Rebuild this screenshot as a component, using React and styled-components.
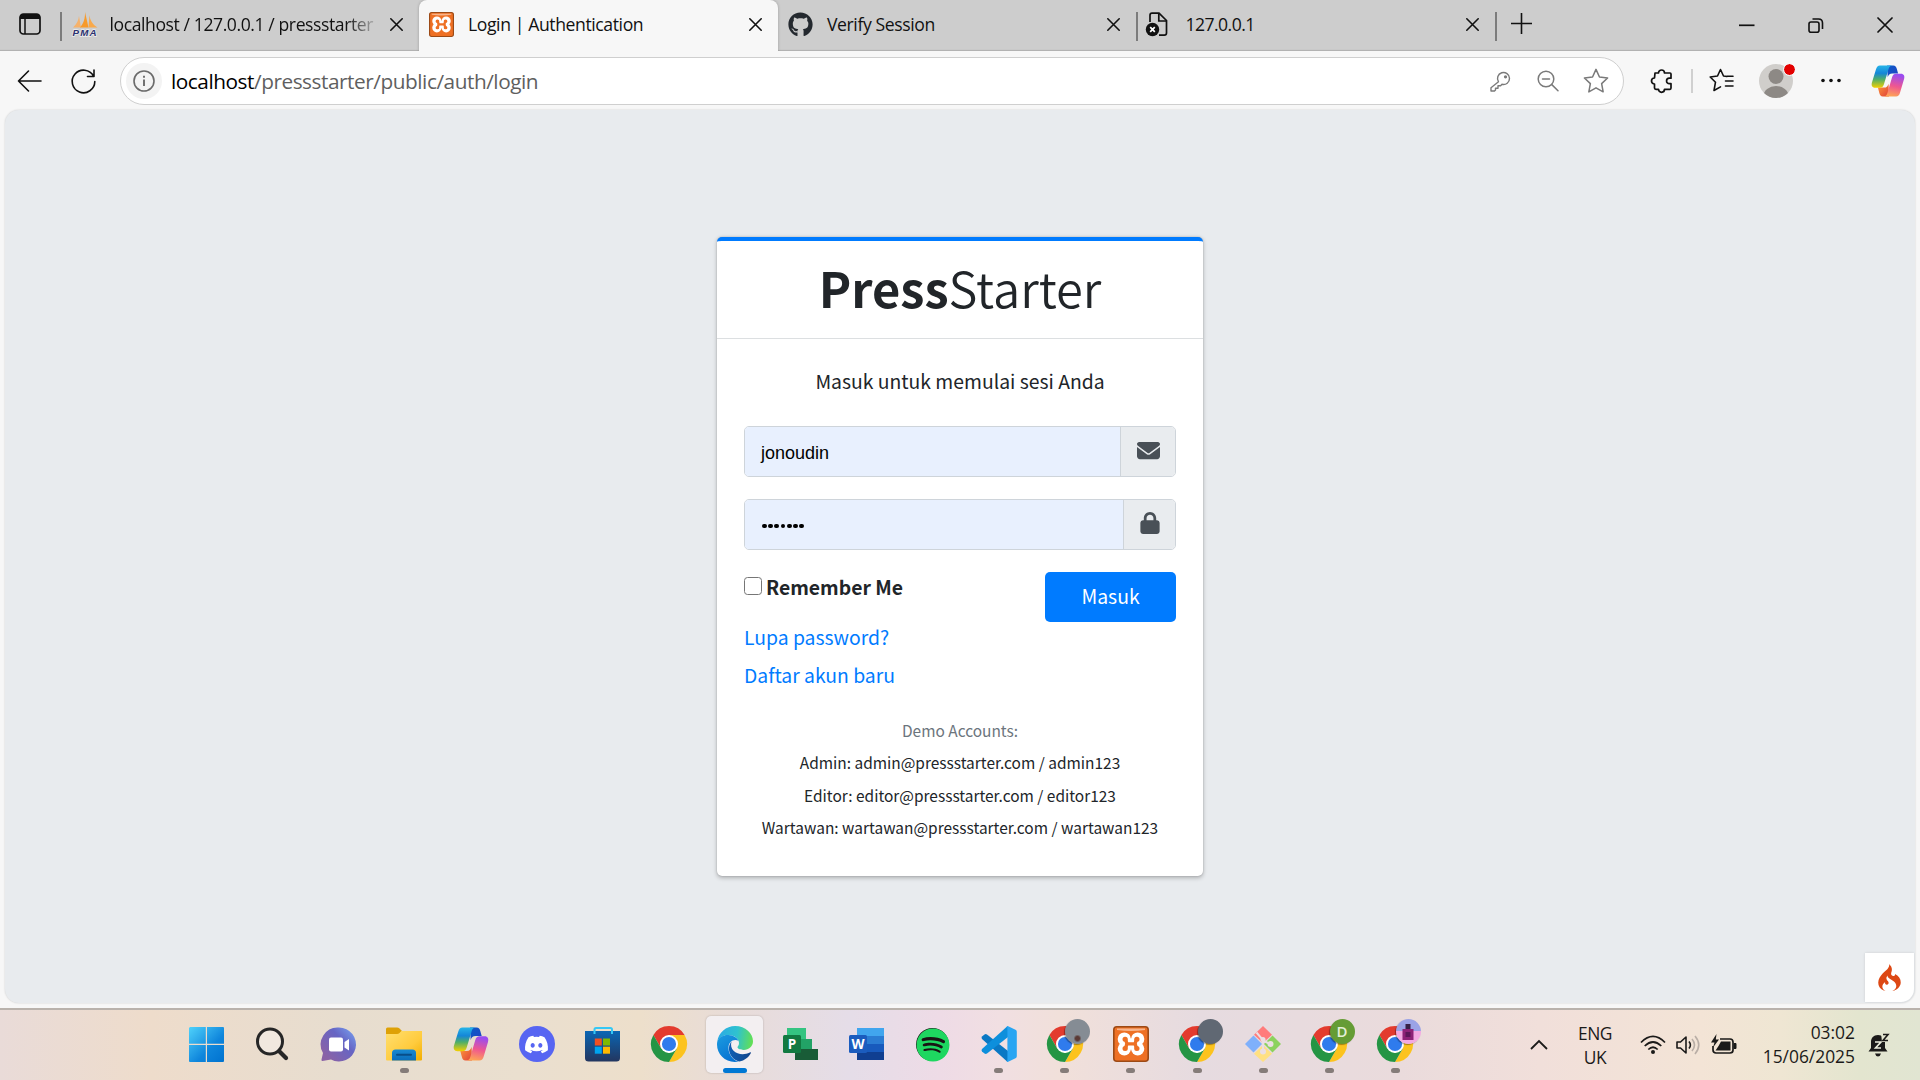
import React from "react";
import styled, { createGlobalStyle, css } from "styled-components";
import { FaGithub, FaSpotify, FaDiscord } from "react-icons/fa";
import { FaEnvelope, FaLock } from "react-icons/fa6";
import { SiCodeigniter } from "react-icons/si";

const ui = `"Open Sans", "Noto Sans", sans-serif`;
const source = `"Noto Sans CJK SC", "Open Sans", sans-serif`;

const GlobalStyle = createGlobalStyle`
  *, *::before, *::after { box-sizing: border-box; }
  html, body { margin: 0; padding: 0; }
  body { width: 1920px; height: 1080px; overflow: hidden; background: #f7f7f7; }
  svg { display: block; flex: none; overflow: visible; }
`;

const Screen = styled.div`
  width: 1920px;
  height: 1080px;
  display: flex;
  flex-direction: column;
  background: #f7f7f7;
  font-family: ${ui};
  overflow: hidden;
`;

/* ---------- tab strip ---------- */
const TabStrip = styled.div`
  height: 51px;
  flex: none;
  display: flex;
  background: #cdcdcd;
  box-shadow: inset 0 -2px 1px -1px #b0b0b0;
`;
const Workspaces = styled.div`
  width: 60px;
  flex: none;
  padding: 13px 0 0 19px;
`;
const Tab = styled.div`
  width: ${(p) => p.$w}px;
  height: 51px;
  flex: none;
  display: flex;
  align-items: flex-start;
  padding: 12px 16px 0 ${(p) => p.$pad}px;
  ${(p) =>
    p.$active &&
    css`
      background: #f7f7f7;
      border-radius: 8px 8px 0 0;
      box-shadow: 0 0 3px rgba(0, 0, 0, 0.25);
      clip-path: inset(0 -4px 0 -4px);
    `}
`;
const TabIcon = styled.div`
  width: 25px;
  height: 25px;
  flex: none;
  margin-right: ${(p) => p.$gap}px;
`;
const TabTitle = styled.div`
  flex: 1;
  min-width: 0;
  height: 30px;
  margin-top: -3px;
  line-height: 30px;
  font-size: 17.6px;
  letter-spacing: ${(p) => p.$ls || -0.4}px;
  color: #111;
  white-space: nowrap;
  ${(p) => p.$fade && css`mask-image: linear-gradient(90deg, #000 88%, transparent 101%);`}
`;
const CloseBox = styled.div`
  width: 13px;
  margin: 6px 0 0 12px;
  flex: none;
`;
const TabDivider = styled.div`
  width: 1.5px;
  height: 29px;
  margin-top: 12px;
  flex: none;
  background: #7c7c7c;
`;
const WindowButtons = styled.div`
  margin-left: auto;
  display: flex;
  padding: 17px 27px 0 0;
  gap: 53px;
`;
const NewTab = styled.div`
  padding: 13px 0 0 14px;
`;

/* ---------- toolbar ---------- */
const Toolbar = styled.div`
  height: 59px;
  flex: none;
  display: flex;
  align-items: center;
  padding-left: 17px;
`;
const ToolSlot = styled.div`
  width: ${(p) => p.$w}px;
  flex: none;
  display: flex;
  margin-top: 1px;
`;
const ExtensionsSlot = styled(ToolSlot)`
  padding-left: 26px;
`;
const CopilotSlot = styled(ToolSlot)`
  padding-left: 30px;
`;
const AddressBar = styled.div`
  width: 1504px;
  height: 48px;
  flex: none;
  border: 1.5px solid #cfcfcf;
  border-radius: 24px;
  background: #fff;
  display: flex;
  align-items: center;
  padding: 0 14px 0 5px;
`;
const InfoCircle = styled.div`
  width: 36px;
  height: 36px;
  border-radius: 50%;
  background: #f3f3f3;
  display: grid;
  place-items: center;
  margin-right: 9px;
`;
const Url = styled.div`
  flex: 1;
  font-size: 20.8px;
  line-height: 30px;
  margin-top: 1px;
  color: #5f5f5f;
  letter-spacing: -0.46px;
  b { font-weight: 400; color: #000; }
`;
const AddressIcons = styled.div`
  display: flex;
  align-items: center;
  gap: 23px;
`;
const Divider = styled.div`
  width: 1.5px;
  height: 24px;
  background: #d0d0d0;
  margin: 1px 16px 0 18px;
`;
const Avatar = styled.div`
  position: relative;
  width: 34px;
  height: 34px;
  margin: 1px 28px 0 25px;
`;
const AvatarDot = styled.span`
  position: absolute;
  right: -2px;
  top: 0;
  width: 11px;
  height: 11px;
  border-radius: 50%;
  background: #e30000;
  outline: 1.5px solid #f7f7f7;
`;

/* ---------- page ---------- */
const Page = styled.main`
  height: 893px;
  margin: 0 5px;
  flex: none;
  background: #e8ebee;
  border-radius: 14px;
  box-shadow: 0 0 2px rgba(0, 0, 0, 0.18);
  display: flex;
  flex-direction: column;
  align-items: center;
  padding-top: 127px;
  color: #212529;
  font-family: ${source};
  overflow: hidden;
`;
const Card = styled.section`
  width: 486px;
  height: 639px;
  flex: none;
  background: #fff;
  border-top: 4px solid #007bff;
  border-radius: 5px;
  box-shadow: 0 0 1.35px rgba(0, 0, 0, 0.25), 0 1.35px 4px rgba(0, 0, 0, 0.25);
`;
const CardHeader = styled.header`
  height: 98px;
  border-bottom: 1px solid #dcdfe1;
  text-align: center;
  font-size: 48.8px;
  line-height: 92px;
  font-weight: 350;
  b { font-weight: 700; }
`;
const CardBody = styled.div`
  padding: 26px 27px 0;
  font-size: 19.35px;
`;
const Lead = styled.p`
  margin: 0 0 29px;
  line-height: 32px;
  text-align: center;
`;
const InputGroup = styled.div`
  display: flex;
  height: 51px;
  margin-bottom: 22px;
  border: 1px solid #ced4da;
  border-radius: 5px;
  overflow: hidden;
`;
const Field = styled.div`
  flex: 1;
  background: #e8f0fe;
  color: #000;
  padding: 1px 0 0 16px;
  font: 18px/50px "Liberation Sans", Arial, sans-serif;
  display: flex;
`;
const PasswordDots = styled.div`
  display: flex;
  align-items: center;
  gap: 1.3px;
  padding-left: 1px;
  i { width: 4.9px; height: 4.9px; border-radius: 50%; background: #000; margin-top: 2px; }
`;
const Addon = styled.div`
  width: ${(p) => p.$w}px;
  background: #e9ecef;
  border-left: 1px solid #ced4da;
  color: #495057;
  display: flex;
  justify-content: center;
  align-items: center;
  padding-bottom: 3px;
`;
const ActionRow = styled.div`
  display: flex;
  justify-content: space-between;
  align-items: flex-start;
  height: 50px;
`;
const Remember = styled.label`
  display: flex;
  align-items: flex-start;
  gap: 4px;
  font-weight: 700;
  line-height: 30px;
`;
const Check = styled.span`
  width: 18px;
  height: 18px;
  margin-top: 5px;
  border: 1.4px solid #767676;
  border-radius: 3.5px;
  background: #fff;
`;
const Submit = styled.button`
  width: 131px;
  height: 50px;
  border: 0;
  border-radius: 5px;
  background: #007bff;
  color: #fff;
  font: 400 19.4px/48px ${source};
  padding: 0 0 2px;
`;
const Links = styled.nav`
  margin-top: -1px;
`;
const TextLink = styled.a`
  display: block;
  color: #007bff;
  line-height: 32px;
  margin-bottom: 6px;
`;
const Demo = styled.div`
  margin-top: 23px;
  text-align: center;
  font-size: 15.46px;
  line-height: 32.4px;
  span { display: block; }
  span:first-child { color: #6c757d; }
`;
const DebugToggle = styled.div`
  width: 49px;
  height: 49px;
  flex: none;
  margin: auto 1px 1px auto;
  background: #fff;
  border-radius: 0 0 13px 0;
  display: grid;
  place-items: center;
  color: #dd4814;
  box-shadow: 0 0 3px rgba(0, 0, 0, 0.12);
`;

/* ---------- taskbar ---------- */
const Taskbar = styled.footer`
  height: 72px;
  margin-top: 5px;
  flex: none;
  display: flex;
  border-top: 2px solid #b9b2ac;
  padding-left: 173.3px;
  background: linear-gradient(90deg,
    #e9dbd8 0, #eedccb 150px, #e7ddcf 340px, #eadfcf 520px, #eddfcb 640px, #e8dcd8 730px,
    #e5dde8 850px, #eedbe6 940px, #f1dfe2 1000px, #f1e0da 1060px, #e6dbe0 1200px, #eadbdc 1400px,
    #f1dfda 1540px, #f3e4d6 1700px, #efe6d3 1780px, #e3e5cf 1860px, #e1e5d2 1920px);
`;
const AppSlot = styled.div`
  width: 66.06px;
  height: 70px;
  flex: none;
  display: flex;
  flex-direction: column;
  align-items: center;
  padding-top: 6px;
`;
const AppTile = styled.div`
  position: relative;
  width: 57px;
  height: 57px;
  display: grid;
  place-items: center;
  padding-bottom: 1px;
  border-radius: 5px;
  ${(p) => p.$active && css`background: #f3eff1; box-shadow: 0 0 2px rgba(0, 0, 0, 0.25);`}
`;
const Indicator = styled.div`
  width: ${(p) => (p.$active ? 24 : 9)}px;
  height: 5px;
  border-radius: 3px;
  margin-top: -5px;
  z-index: 1;
  background: ${(p) => (p.$active ? "#0078d4" : "#857c79")};
`;
const ProfileBadge = styled.span`
  position: absolute;
  left: 29px;
  top: 3px;
  width: 25px;
  height: 25px;
  border-radius: 50%;
  display: grid;
  place-items: center;
  background: ${(p) => p.$bg};
  color: #e4efd8;
  font: 600 15px/25px ${ui};
  box-shadow: -1px 1px 1px rgba(0, 0, 0, 0.35);
`;
const Tray = styled.div`
  margin-left: auto;
  height: 70px;
  display: flex;
  align-items: center;
  padding-right: 31px;
  color: #1b1a19;
`;
const TrayText = styled.div`
  width: ${(p) => p.$w}px;
  text-align: ${(p) => p.$align};
  font-size: 17.4px;
  line-height: 24px;
  letter-spacing: ${(p) => p.$ls}px;
  white-space: nowrap;
  margin-top: ${(p) => p.$top}px;
`;
const TraySlot = styled.div`
  width: ${(p) => p.$w}px;
  padding-left: ${(p) => p.$pad || 0}px;
  display: flex;
`;

/* ---------- icons ---------- */
const Cross = ({ s = 13, w = 1.6 }) => (
  <svg width={s} height={s} viewBox="0 0 13 13" stroke="#111" strokeWidth={w} strokeLinecap="round">
    <path d="M.8.8 12.2 12.2M12.2.8.8 12.2" />
  </svg>
);
const PmaIcon = () => (
  <svg width="26" height="25" viewBox="0 0 26 25">
    <path d="M7 4 9 15.500H1C5 12 6.500 8 7 4z" fill="#f6b26b" />
    <path d="M13 0 16.500 15.500H8C12 11 13.200 6 13 0z" fill="#f79a2b" />
    <path d="M17.500 3c.4 5 3 9.500 8 12.500H16.500z" fill="#f9a94a" />
    <text x="12.500" y="24" textAnchor="middle" fontFamily="Liberation Sans, Arial, sans-serif" fontWeight="700" fontStyle="italic" fontSize="9.800" fill="#2c3270" stroke="#eee" strokeWidth="1.400" paintOrder="stroke" textLength="24">PMA</text>
  </svg>
);
const XamppIcon = ({ size = 25 }) => (
  <svg width={size} height={size} viewBox="0 0 36 36">
    <rect x=".8" y=".8" width="34.400" height="34.400" rx="3" fill="#ee7024" stroke="#9c4a16" strokeWidth="1.600" />
    <path d="M4 2.500h28v1.600q-14 2-28 0z" fill="#f7b58c" />
    <g fill="#fff"><circle cx="11.300" cy="13" r="6.600" /><circle cx="24.700" cy="13" r="6.600" /><circle cx="11.300" cy="22.800" r="6.600" /><circle cx="24.700" cy="22.800" r="6.600" /><path d="M12 12.500h12v11H12z" /></g>
    <g stroke="#ee7024" strokeLinecap="round" strokeWidth="4.400" fill="none"><path d="M12 13.300h.3M23.700 13.300h.3M12 22.500h.3M23.700 22.500h.3" strokeWidth="5" /><path d="M12.500 13.500l1.500 4.300-1.500 4.300M23.500 13.500 22 17.800l1.500 4.300M13.500 17.900h9" strokeWidth="3.400" /></g>
  </svg>
);
const BrokenPage = () => (
  <svg width="25" height="25" viewBox="0 0 25 25" fill="none" stroke="#111" strokeWidth="1.700">
    <path d="M5 10V3.300C5 2 5.700 1.200 7 1.200h7L21.500 8.500V21c0 1.400-.8 2.200-2.200 2.200H14" />
    <path d="M13.800 1.500V9h7.500" />
    <circle cx="7.500" cy="17.500" r="6.700" fill="#111" stroke="none" />
    <path d="m5.200 15.200 4.600 4.600m0-4.600-4.600 4.600" stroke="#fff" />
  </svg>
);
const StarPath = "M12 1.300l3.200 7 7.500.9-5.500 5.200 1.400 7.600L12 18.300 5.400 22l1.400-7.600L1.300 9.200l7.500-.9z";

const CopilotIcon = ({ id, size = 36 }) => (
  <svg width={size} height={size} viewBox="0 0 36 36">
    <defs>
      <linearGradient id={`${id}a`} x1="0" y1="0" x2="0" y2="1">
        <stop offset="0" stopColor="#27b5e8" /><stop offset=".35" stopColor="#1486d8" /><stop offset=".62" stopColor="#4fae68" /><stop offset="1" stopColor="#f4d000" />
      </linearGradient>
      <linearGradient id={`${id}b`} x1=".4" y1="0" x2=".2" y2="1">
        <stop offset="0" stopColor="#9a4cf0" /><stop offset=".5" stopColor="#ef5790" /><stop offset="1" stopColor="#ffab50" />
      </linearGradient>
      <linearGradient id={`${id}c`} x1="0" y1="0" x2="1" y2="1">
        <stop offset="0" stopColor="#0a5bc8" /><stop offset="1" stopColor="#2344c4" />
      </linearGradient>
      <linearGradient id={`${id}d`} x1="0" y1="0" x2="1" y2="1">
        <stop offset="0" stopColor="#ff9c3a" /><stop offset="1" stopColor="#e0403a" />
      </linearGradient>
    </defs>
    <path d="M17 1.500h6.500c2.400 0 3.200 1.500 3.800 3.500l1.400 5h-6c-3 0-4.300 1.500-5 4z" fill={`url(#${id}c)`} />
    <path d="M19 34.500h-6.500c-2.300 0-3-1.500-3.600-3.500L7.300 25h6.500c3 0 4-1.800 4.800-4.200z" fill={`url(#${id}d)`} />
    <path d="M9.500 1.500h13c-2 0-3.200 1.400-3.800 3.400l-5 16.500c-.8 2.600-2 3.800-4.500 3.800H4.400c-3.300 0-4.300-2.600-3.400-5.600L5.300 5.500c.8-2.600 1.900-4 4.200-4z" fill={`url(#${id}a)`} />
    <path d="M26.500 34.500h-13c2 0 3.200-1.400 3.800-3.400l5-17c.8-2.600 2-3.800 4.500-3.800h4.800c3.300 0 4.300 2.600 3.400 5.600l-4.300 14.600c-.8 2.600-1.900 4-4.200 4z" fill={`url(#${id}b)`} />
  </svg>
);
const WindowsIcon = () => (
  <svg width="35" height="35" viewBox="0 0 35 35">
    <defs><linearGradient id="win" gradientUnits="userSpaceOnUse" x1="0" y1="0" x2="35" y2="35"><stop offset="0" stopColor="#4fd2fb" /><stop offset=".6" stopColor="#0f86dc" /><stop offset="1" stopColor="#0072cf" /></linearGradient></defs>
    <path fill="url(#win)" d="M1 0h15.800v16.800H0V1zM18 0h16a1 1 0 0 1 1 1v15.800H18zM0 18h16.800v17H1a1 1 0 0 1-1-1zM18 18h17v16a1 1 0 0 1-1 1H18z" />
  </svg>
);
const SearchIcon = () => (
  <svg width="34" height="34" viewBox="0 0 34 34" fill="none" stroke="#262626" strokeLinecap="round">
    <circle cx="15" cy="14.500" r="12.500" strokeWidth="3" fill="#f1e8df" /><path d="m24.500 24.500 6.500 6.500" strokeWidth="4.200" />
  </svg>
);
const MeetIcon = () => (
  <svg width="35" height="35" viewBox="0 0 35 35">
    <defs><linearGradient id="meet" x1="1" y1="0" x2=".1" y2=".8"><stop offset="0" stopColor="#79a7f5" /><stop offset=".45" stopColor="#6665c4" /><stop offset="1" stopColor="#8a62a6" /></linearGradient></defs>
    <path d="M18 .5a17 17 0 1 1-8 32L1.500 34q-1.300 0-1-1.500L2 26A17 17 0 0 1 18 .5z" fill="url(#meet)" />
    <rect x="8" y="10.500" width="14" height="14" rx="2" fill="#fff" /><path d="M23.500 15 28 12v11.500l-4.500-3z" fill="#fff" />
  </svg>
);
const FolderIcon = () => (
  <svg width="36" height="34" viewBox="0 0 36 34">
    <defs><linearGradient id="fold" x1="0" y1="0" x2="1" y2="1"><stop offset="0" stopColor="#ffdf70" /><stop offset=".6" stopColor="#ffcb3d" /><stop offset="1" stopColor="#f2ae00" /></linearGradient>
      <linearGradient id="foldb" x1="0" y1="0" x2="0" y2="1"><stop offset="0" stopColor="#1889d2" /><stop offset="1" stopColor="#0b6dbb" /></linearGradient></defs>
    <path d="M0 8V2q0-1.500 1.500-1.500H11q1.500 0 2.500 1L16 4l-4 5H0z" fill="#dea106" />
    <path d="M0 7h11q1.500 0 2.500-1l2-2H36v28.500q0 1-1 1H1q-1 0-1-1z" fill="url(#fold)" />
    <path d="M6 33.500V26q0-3.500 3.500-3.500h17q3.500 0 3.500 3.500v7.500z" fill="url(#foldb)" /><path d="M11 27.700h14" stroke="#084e89" strokeWidth="2" strokeLinecap="round" />
  </svg>
);
const DiscordTile = styled.div`
  width: 36px;
  height: 36px;
  border-radius: 50%;
  background: #5765f2;
  color: #fff;
  display: grid;
  place-items: center;
`;
const StoreIcon = () => (
  <svg width="36" height="36" viewBox="0 0 36 36">
    <defs><linearGradient id="store" x1="0" y1="0" x2="0" y2="1"><stop offset="0" stopColor="#0a66b4" /><stop offset="1" stopColor="#23365f" /></linearGradient></defs>
    <path d="M0 5h35v27q0 3.500-3.500 3.500h-28Q0 35.500 0 32z" fill="url(#store)" />
    <path d="M9.500 8V3.500Q9.500 2 11 2h14.500q1.500 0 1.500 1.500V8" fill="none" stroke="#35c8f5" strokeWidth="2" />
    <path d="M9.800 12.500h7v7h-7z" fill="#f25022" /><path d="M18 12.500h7v7h-7z" fill="#7fba00" /><path d="M9.800 20.700h7v7h-7z" fill="#00a4ef" /><path d="M18 20.700h7v7h-7z" fill="#ffb900" />
  </svg>
);
const ChromeIcon = () => (
  <svg width="36" height="36" viewBox="0 0 48 48">
    <path d="M3.200 12A24 24 0 0 1 44.800 12L24 12 13.600 30z" fill="#e33b2e" />
    <path d="M44.800 12A24 24 0 0 1 24 48L34.400 30 24 12z" fill="#fcc31e" />
    <path d="M24 48A24 24 0 0 1 3.200 12L13.600 30 24 36 34.400 30z" fill="#249544" />
    <circle cx="24" cy="24" r="12" fill="#fff" /><circle cx="24" cy="24" r="9.400" fill="#2f7bed" />
  </svg>
);
const EdgeIcon = () => (
  <svg width="36" height="36" viewBox="0 0 36 36">
    <defs>
      <linearGradient id="ea" x1="0" y1=".3" x2="1" y2=".4"><stop offset="0" stopColor="#2aa9e6" /><stop offset=".55" stopColor="#2fc2cf" /><stop offset="1" stopColor="#62df55" /></linearGradient>
      <linearGradient id="eb" x1="0" y1="0" x2=".5" y2="1"><stop offset="0" stopColor="#1b9ce0" /><stop offset="1" stopColor="#0873d2" /></linearGradient>
      <linearGradient id="ec" x1="0" y1="0" x2="1" y2="0"><stop offset="0" stopColor="#0f5fb4" /><stop offset="1" stopColor="#11448a" /></linearGradient>
    </defs>
    <path d="M.3 15.500C1.500 6.500 9 0 18.200 0 28.500 0 36 7.300 36 15.300c0 5.300-4.300 8.600-9.200 8.600-4.500 0-6.300-1.700-6.300-2.700 0-.8 1.500-1.500 1.500-4.200 0-4-4.500-8-10.500-8C5.500 9 2 12 .3 15.500z" fill="url(#ea)" />
    <path d="M.3 15.500C2 11 6.500 8.700 11.500 9c5 .2 9 3 10 5.700-5.500-2-10 1.300-10 7.300 0 6.500 4.500 12.500 10.500 13.500C10 38 0 29.500 0 18.500c0-1 .1-2 .3-3z" fill="url(#eb)" />
    <path d="M14.500 15.500c-5.500 6.500-1.500 18 8 20 5-.9 9-4 11.300-8.200.4-.8-.3-1.300-1-.8-9 4.600-21.300-.5-18.300-11z" fill="url(#ec)" />
  </svg>
);
const OfficeIcon = ({ kind }) => (
  <svg width="36" height="34" viewBox="0 0 36 34">
    {kind === "P" ? (
      <g><path d="M4 1h19v11H4z" fill="#35c481" /><path d="M4 12h25v10.500H4z" fill="#22a366" /><path d="M12 22h23v11H12z" fill="#195c37" /></g>
    ) : (
      <g><path d="M8 1h27v8.500H8z" fill="#41a5ee" /><path d="M8 9h27v8.500H8z" fill="#2b7cd3" /><path d="M8 17h27v8.500H8z" fill="#185abd" /><path d="M8 25h27v8H8z" fill="#103f91" /></g>
    )}
    <rect x="0" y="8" width="18" height="18" rx="1.500" fill={kind === "P" ? "#127a41" : "#1b5cbe"} />
    <text x="9" y="22" textAnchor="middle" fontFamily="Open Sans, sans-serif" fontSize="13.500" fontWeight="700" fill="#fff">{kind}</text>
  </svg>
);
const SpotifyTile = styled.div`
  width: 33px;
  height: 33px;
  border-radius: 50%;
  background: #191414;
  color: #1ed760;
  display: grid;
  place-items: center;
`;
const CodeIcon = () => (
  <svg width="36" height="36" viewBox="0 0 36 36">
    <path d="M1 10.500 3.500 8.500q1.200-.8 2.500 0L27 25v10.500L25.500 35 1 13q-1-1.300 0-2.500z" fill="#0a78c4" />
    <path d="M1 25.500 3.500 27.500q1.200.8 2.500 0L27 11V.5L25.500 1 1 23q-1 1.300 0 2.500z" fill="#0d8fdc" />
    <path d="M25.500.3q.8-.4 1.700 0l7.300 3.500q1.300.7 1.300 2v24.400q0 1.300-1.300 2l-7.300 3.500q-1 .4-1.700-.1.900-.5.900-2V2.400q0-1.500-.9-2.100z" fill="#29a5f2" />
  </svg>
);
const GitIcon = () => (
  <svg width="36" height="36" viewBox="0 0 36 36">
    <path d="M18 0l9 8.700-9 8.300-9-8.300z" fill="#ff7b7b" /><path d="M8.500 9.500l8.500 8.500-8.500 8.500L0 18z" fill="#7fb0fb" />
    <path d="M27.500 9.500 36 18l-8.500 8.500L19 18z" fill="#8cd25e" /><path d="M18 19l9 8.700-9 8.300-9-8.300z" fill="#ffe082" />
    <path d="M11.500 6.500 18 14v11M18 14.500l7 3.500" fill="none" stroke="#ebdfe3" strokeWidth="2" /><circle cx="18" cy="25.500" r="3" fill="#ebdfe3" /><circle cx="25.500" cy="18" r="3" fill="#ebdfe3" /><circle cx="18" cy="13.500" r="2.500" fill="#ebdfe3" />
  </svg>
);
const PerfumeArt = () => (
  <svg width="14" height="18" viewBox="0 0 14 18"><path d="M4.500 1h5v5h-5z" fill="#372147" /><rect x="1.500" y="6" width="11" height="11" fill="#8d2277" /><path d="M4.500 9h5v5h-5z" fill="#5c1759" /></svg>
);

const APPS = [
  { icon: <WindowsIcon /> },
  { icon: <SearchIcon /> },
  { icon: <MeetIcon /> },
  { icon: <FolderIcon />, open: true },
  { icon: <CopilotIcon id="t" /> },
  { icon: <DiscordTile><FaDiscord size={25} /></DiscordTile> },
  { icon: <StoreIcon /> },
  { icon: <ChromeIcon /> },
  { icon: <EdgeIcon />, open: true, active: true },
  { icon: <OfficeIcon kind="P" /> },
  { icon: <OfficeIcon kind="W" /> },
  { icon: <SpotifyTile><FaSpotify size={34} /></SpotifyTile> },
  { icon: <CodeIcon />, open: true },
  { icon: <ChromeIcon />, open: true, badge: "radial-gradient(circle at 50% 78%, #5b3a35 0 2px, #858c94 4px)" },
  { icon: <XamppIcon size={36} />, open: true },
  { icon: <ChromeIcon />, open: true, badge: "#606873" },
  { icon: <GitIcon />, open: true },
  { icon: <ChromeIcon />, open: true, badge: "#659c35", mark: "D" },
  { icon: <ChromeIcon />, open: true, badge: "linear-gradient(#9ba3e6 50%, #f3a9e2 50%)", mark: <PerfumeArt /> },
];

const Password = ({ length }) => (
  <PasswordDots>{Array.from({ length }, (_, i) => <i key={i} />)}</PasswordDots>
);

export default function App() {
  return (
    <Screen>
      <GlobalStyle />
      <TabStrip>
        <Workspaces>
          <svg width="22" height="22" viewBox="0 0 22 22"><rect x="1" y="1" width="20" height="20" rx="3.500" fill="none" stroke="#111" strokeWidth="1.700" /><path d="M1 6V4q0-3 3-3h14q3 0 3 3v2z" fill="#111" /><path d="M6 5v16" stroke="#111" strokeWidth="1.500" /></svg>
        </Workspaces>
        <TabDivider />
        <Tab $w={357.5} $pad={10}>
          <TabIcon $gap={13}><PmaIcon /></TabIcon>
          <TabTitle $fade $ls={-0.42}>localhost / 127.0.0.1 / pressstarter</TabTitle>
          <CloseBox><Cross /></CloseBox>
        </Tab>
        <Tab $w={359} $pad={10} $active>
          <TabIcon $gap={14}><XamppIcon /></TabIcon>
          <TabTitle>Login | Authentication</TabTitle>
          <CloseBox><Cross /></CloseBox>
        </Tab>
        <Tab $w={358} $pad={10}>
          <TabIcon $gap={14}><FaGithub size={25} color="#24292f" /></TabIcon>
          <TabTitle>Verify Session</TabTitle>
          <CloseBox><Cross /></CloseBox>
        </Tab>
        <TabDivider />
        <Tab $w={357.5} $pad={7}>
          <TabIcon $gap={16}><BrokenPage /></TabIcon>
          <TabTitle $ls={-0.55}>127.0.0.1</TabTitle>
          <CloseBox><Cross /></CloseBox>
        </Tab>
        <TabDivider />
        <NewTab><svg width="21" height="21" viewBox="0 0 21 21" stroke="#111" strokeWidth="1.600"><path d="M10.500 0v21M0 10.500h21" /></svg></NewTab>
        <WindowButtons>
          <svg width="16" height="16" viewBox="0 0 16 16" stroke="#111" strokeWidth="1.700"><path d="M0 8.300h15.500" /></svg>
          <svg width="16" height="16" viewBox="0 0 16 16" stroke="#111" strokeWidth="1.600" fill="none"><rect x="1" y="5" width="10" height="10.200" rx="2" /><path d="M4.500 2h6q4 0 4 4v6" /></svg>
          <Cross s={16} w={1.4} />
        </WindowButtons>
      </TabStrip>

      <Toolbar>
        <ToolSlot $w={54}><svg width="25" height="22" viewBox="0 0 25 22" fill="none" stroke="#111" strokeWidth="1.600" strokeLinecap="round" strokeLinejoin="round"><path d="M24 11H1.500M11.500 1 1.500 11l10 10" /></svg></ToolSlot>
        <ToolSlot $w={49}><svg width="25" height="25" viewBox="0 0 25 25" fill="none" stroke="#111" strokeWidth="1.600" strokeLinecap="round" strokeLinejoin="round"><path d="M23.800 12.500A11.300 11.300 0 1 1 22.500 7.200M23 1v6.500h-6.500" /></svg></ToolSlot>
        <AddressBar>
          <InfoCircle><svg width="22" height="22" viewBox="0 0 22 22" fill="none" stroke="#6a6a6a" strokeWidth="1.600"><circle cx="11" cy="11" r="10" /><path d="M11 9.500v6.500M11 5.800v2" strokeWidth="1.900" /></svg></InfoCircle>
          <Url><b>localhost</b>/pressstarter/public/auth/login</Url>
          <AddressIcons>
            <svg width="24" height="22" viewBox="0 0 24 22" fill="none" stroke="#7a7a7a" strokeWidth="1.400" strokeLinejoin="round"><path d="M9.500 11.800A6 6 0 1 1 13 14.300l-1.400 1.400H9v2.500H6.500V20l-1 1H2v-3.200z" /><circle cx="16.500" cy="6.800" r=".9" fill="#7a7a7a" /></svg>
            <svg width="24" height="22" viewBox="0 0 24 22" fill="none" stroke="#7a7a7a" strokeWidth="1.500" strokeLinecap="round"><circle cx="10" cy="9" r="7.800" /><path d="m15.800 14.600 6.200 6.200M6.500 9h7" /></svg>
            <svg width="26" height="26" viewBox="0 0 24 24" fill="none" stroke="#7a7a7a" strokeWidth="1.400" strokeLinejoin="round"><path d={StarPath} /></svg>
          </AddressIcons>
        </AddressBar>
        <ExtensionsSlot $w={49}>
          <svg width="23" height="24" viewBox="0 0 23 24" fill="none" stroke="#111" strokeWidth="1.700" strokeLinejoin="round"><path d="M5 4h3.500a3 3 0 0 1 6 0H20q1 0 1 1v4.200h-1.700a2.700 2.700 0 0 0 0 5.500H21V19q0 1.300-1 1.300h-5.500a3 3 0 0 1-6 0H6q-1.500 0-1.500-1.300v-4a3 3 0 0 1 0-6z" /></svg>
        </ExtensionsSlot>
        <Divider />
        <svg width="25" height="25" viewBox="0 0 25 25" fill="none" stroke="#111" strokeWidth="1.600" strokeLinejoin="round" strokeLinecap="round"><path d="M18 8.500 14.500 8 11.500 1.500 8.500 8 1.200 9l5.300 5.200L5 22.500l6.500-3.600M16.500 13H24M16.500 18H24M18 8.300h6" /></svg>
        <Avatar>
          <svg width="34" height="34" viewBox="0 0 34 34"><clipPath id="av"><circle cx="17" cy="17" r="17" /></clipPath><g clipPath="url(#av)"><path d="M0 0h34v34H0z" fill="#d0cecb" /><circle cx="17" cy="12.500" r="7.500" fill="#8d8985" /><ellipse cx="17" cy="32" rx="12.500" ry="10" fill="#8d8985" /></g></svg>
          <AvatarDot />
        </Avatar>
        <svg width="20" height="5" viewBox="0 0 20 5" fill="#111"><circle cx="2" cy="2.500" r="1.800" /><circle cx="10" cy="2.500" r="1.800" /><circle cx="18" cy="2.500" r="1.800" /></svg>
        <CopilotSlot $w={65}><CopilotIcon id="h" size={34} /></CopilotSlot>
      </Toolbar>

      <Page>
        <Card>
          <CardHeader><b>Press</b>Starter</CardHeader>
          <CardBody>
            <Lead>Masuk untuk memulai sesi Anda</Lead>
            <InputGroup><Field>jonoudin</Field><Addon $w={55}><FaEnvelope size={23} /></Addon></InputGroup>
            <InputGroup><Field><Password length={7} /></Field><Addon $w={52}><FaLock size={22} /></Addon></InputGroup>
            <ActionRow>
              <Remember><Check />Remember Me</Remember>
              <Submit>Masuk</Submit>
            </ActionRow>
            <Links>
              <TextLink>Lupa password?</TextLink>
              <TextLink>Daftar akun baru</TextLink>
            </Links>
            <Demo>
              <span>Demo Accounts:</span>
              <span>Admin: admin@pressstarter.com / admin123</span>
              <span>Editor: editor@pressstarter.com / editor123</span>
              <span>Wartawan: wartawan@pressstarter.com / wartawan123</span>
            </Demo>
          </CardBody>
        </Card>
        <DebugToggle><SiCodeigniter size={27} /></DebugToggle>
      </Page>

      <Taskbar>
        {APPS.map((a, i) => (
          <AppSlot key={i}>
            <AppTile $active={a.active}>
              {a.icon}
              {a.badge && <ProfileBadge $bg={a.badge}>{a.mark}</ProfileBadge>}
            </AppTile>
            {a.open && <Indicator $active={a.active} />}
          </AppSlot>
        ))}
        <Tray>
          <TraySlot $w={46}><svg width="18" height="10" viewBox="0 0 18 10" fill="none" stroke="#1b1a19" strokeWidth="1.800"><path d="m1 9 8-8 8 8" /></svg></TraySlot>
          <TrayText $w={38} $align="center" $ls={-0.4} $top={0}>ENG<br />UK</TrayText>
          <TraySlot $w={62} $pad={26}>
            <svg width="26" height="20" viewBox="0 0 26 20" fill="none" stroke="#1b1a19" strokeWidth="1.700"><path d="M1 7.500q12-12 24 0M4.700 11q8.300-8 16.600 0M8.300 14.500q4.700-4.500 9.400 0" /><circle cx="13" cy="17" r="2" fill="#1b1a19" stroke="none" /></svg>
          </TraySlot>
          <TraySlot $w={35}>
            <svg width="25" height="20" viewBox="0 0 25 20" fill="none" stroke="#1b1a19" strokeWidth="1.600"><path d="M1 7h3.500L10 2v16l-5.500-5H1z" strokeLinejoin="round" /><path d="M13 6.500q2.800 3.500 0 7" /><path d="M16 4q5 6 0 12M19 1q7.500 9 0 18" stroke="#b9aea6" /></svg>
          </TraySlot>
          <TraySlot $w={47}>
            <svg width="26" height="22" viewBox="0 0 26 22" fill="none" stroke="#1b1a19"><path d="M9 5h10q3 0 3 3v8q0 3-3 3H5q-3 0-3-3v-4" strokeWidth="1.700" /><path d="M10 7.500h9.500v9h-15q3-4 5.500-9z" fill="#1b1a19" stroke="none" /><path d="M23 9.500h2v5h-2z" fill="#1b1a19" /><path d="M5.500 0 0 8.500h3.500L2 13.500l6-8H4.800z" fill="#1b1a19" stroke="none" /></svg>
          </TraySlot>
          <TrayText $w={97} $align="right" $ls={0} $top={-2}>03:02<br />15/06/2025</TrayText>
          <TraySlot $w={34} $pad={13}>
            <svg width="22" height="24" viewBox="0 0 22 24"><path d="M10 2C5.500 2 3 5 3 9v6L.5 18.500h19L17 15V9c0-4-2.500-7-7-7zM7 20.500h6q-.8 3-3 3t-3-3z" fill="#1b1a19" /><path d="M7 9h6l-5.500 6H13" fill="none" stroke="#eef0df" strokeWidth="1.600" /><path d="M13 0h8v9h-7z" fill="#e4e5d0" /><path d="M15 1.500h5l-5 6h5" fill="none" stroke="#1b1a19" strokeWidth="1.600" /></svg>
          </TraySlot>
        </Tray>
      </Taskbar>
    </Screen>
  );
}
